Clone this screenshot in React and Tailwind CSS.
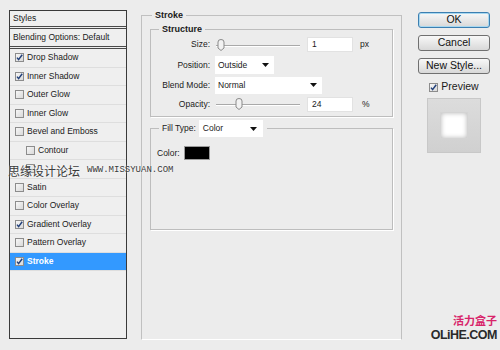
const STYLES = [
  { name: 'Drop Shadow', on: true },
  { name: 'Inner Shadow', on: true },
  { name: 'Outer Glow' },
  { name: 'Inner Glow' },
  { name: 'Bevel and Emboss' },
  { name: 'Contour', indent: true },
  // label hidden under the watermark in the shot
  { name: '', indent: true },
  { name: 'Satin' },
  { name: 'Color Overlay' },
  { name: 'Gradient Overlay', on: true },
  { name: 'Pattern Overlay' },
  { name: 'Stroke', on: true, active: true },
]

function Check({ on }) {
  return (
    <span className="flex h-[9px] w-[9px] shrink-0 items-center justify-center border border-[#8c8c8c] bg-gradient-to-br from-[#f7f7f7] to-[#d9d9d9]">
      {on && (
        <svg width="7" height="7" viewBox="0 0 7 7">
          <path d="M1 3.6 L2.6 5.6 L6.2 0.8" fill="none" stroke="#22407a" strokeWidth="1.5" />
        </svg>
      )}
    </span>
  )
}

function Arrow() {
  return (
    <svg width="7" height="4" viewBox="0 0 7 4" className="shrink-0">
      <path d="M0 0 H7 L3.5 4 Z" fill="#111" />
    </svg>
  )
}

function Slider({ at }) {
  return (
    <div className="relative h-[12px] w-[84px]">
      <div className="absolute left-0 right-0 top-[6px] h-[2px] border-t border-[#a9a9a9] bg-white" />
      <svg width="8" height="12" viewBox="0 0 8 12" className="absolute top-0" style={{ left: at }}>
        <path d="M1 3 Q1 0.5 4 0.5 Q7 0.5 7 3 V9 L4 11.5 L1 9 Z" fill="#f2f2f2" stroke="#8a8a8a" />
      </svg>
    </div>
  )
}

function Field({ value }) {
  return (
    <div className="flex h-[15px] w-[46px] items-center border border-[#e2e2e2] bg-white pl-[4px]">
      {value}
    </div>
  )
}

function Button({ children, primary }) {
  return (
    <div
      className={`flex h-[16px] items-center justify-center rounded-[3px] border bg-gradient-to-b from-[#f8f8f8] to-[#d8d8d8] text-[10.5px] text-[#111] ${
        primary ? 'border-[#3c7fb1] shadow-[inset_0_0_0_1px_#a8d8f0]' : 'border-[#707070]'
      }`}
    >
      {children}
    </div>
  )
}

export default function App() {
  return (
    <div className="relative flex h-[350px] w-[500px] items-start overflow-hidden bg-[#ececec] font-['Liberation_Sans',Arial,sans-serif] text-[8.5px] text-[#1a1a1a]">
      {/* styles list */}
      <div className="ml-[9px] mt-[10px] h-[329px] w-[118px] border border-[#3a3a3a] bg-[#efefef]">
        <div className="flex h-[18px] items-center border-b-[3px] border-double border-[#4a4a4a] pl-[3px]">Styles</div>
        <div className="flex h-[20px] items-center border-b-[3px] border-double border-[#4a4a4a] pl-[3px]">
          Blending Options: Default
        </div>
        {STYLES.map((s, i) => (
          <div
            key={i}
            className={`flex h-[18.5px] items-center gap-[3px] border-b border-[#dedede] ${s.indent ? 'pl-[16px]' : 'pl-[5px]'} ${
              s.active ? 'bg-[#3399ff] font-bold text-white' : ''
            }`}
          >
            <Check on={s.on} />
            {s.name && <span>{s.name}</span>}
          </div>
        ))}
      </div>

      {/* stroke frame */}
      <fieldset className="ml-[14px] mt-[10px] h-[330px] w-[261px] border border-[#c0c0c0] border-b-white px-[8px]">
        <legend className="ml-[2px] px-[3px] text-[9px] font-bold leading-[10px]">Stroke</legend>

        <fieldset className="mt-[4px] h-[93px] border border-[#bdbdbd] shadow-[1px_1px_0_#fff]">
          <legend className="ml-[8px] px-[3px] text-[9px] font-bold leading-[10px]">Structure</legend>
          <div className="flex h-[21px] items-center">
            <span className="w-[59px] text-right">Size:</span>
            <div className="ml-[6px]">
              <Slider at={1} />
            </div>
            <div className="ml-[7px]">
              <Field value="1" />
            </div>
            <span className="ml-[7px]">px</span>
          </div>
          <div className="flex h-[20px] items-center">
            <span className="w-[59px] text-right">Position:</span>
            <div className="ml-[5px] flex h-[18px] w-[59px] items-center justify-between bg-white pl-[3px] pr-[5px]">
              <span>Outside</span>
              <Arrow />
            </div>
          </div>
          <div className="flex h-[20px] items-center">
            <span className="w-[59px] text-right">Blend Mode:</span>
            <div className="ml-[5px] flex h-[17px] w-[107px] items-center justify-between bg-white pl-[3px] pr-[5px]">
              <span>Normal</span>
              <Arrow />
            </div>
          </div>
          <div className="flex h-[18px] items-center">
            <span className="w-[59px] text-right">Opacity:</span>
            <div className="ml-[6px]">
              <Slider at={19} />
            </div>
            <div className="ml-[7px]">
              <Field value="24" />
            </div>
            <span className="ml-[9px]">%</span>
          </div>
        </fieldset>

        <fieldset className="mt-[3px] h-[110px] border border-[#bdbdbd] shadow-[1px_1px_0_#fff]">
          <legend className="ml-[8px] flex items-center gap-[3px] pl-[3px] pr-[4px]">
            <span>Fill Type:</span>
            <div className="flex h-[17px] w-[64px] items-center justify-between bg-white pl-[4px] pr-[6px]">
              <span>Color</span>
              <Arrow />
            </div>
          </legend>
          <div className="mt-[8px] flex h-[16px] items-center pl-[6px]">
            <span className="w-[27px]">Color:</span>
            <div className="h-[14px] w-[26px] border border-[#9a9a9a] bg-black" />
          </div>
        </fieldset>
      </fieldset>

      {/* buttons */}
      <div className="ml-[16px] mt-[12px] flex w-[72px] flex-col">
        <div className="flex flex-col gap-[7px]">
          <Button primary>OK</Button>
          <Button>Cancel</Button>
          <Button>New Style...</Button>
        </div>
        <div className="mt-[7px] flex h-[12px] items-center justify-center gap-[3px] text-[10.5px]">
          <Check on />
          <span>Preview</span>
        </div>
        <div className="mx-auto mt-[5px] flex h-[55px] w-[54px] items-center justify-center border border-[#c8c8c8] bg-gradient-to-b from-[#dcdcdc] to-[#d0d0d0]">
          <div className="h-[27px] w-[28px] border border-[#d4d4d4] bg-white shadow-[inset_0_0_5px_#b8b8b8]" />
        </div>
      </div>

      {/* watermarks */}
      <div className="absolute left-[8px] top-[163px] flex items-center gap-[7px] text-[#3a3a3a] [text-shadow:0_0_2px_#fff]">
        <span className="font-['Noto_Sans_CJK_SC',sans-serif] text-[12px] leading-[16px]">思缘设计论坛</span>
        <span className="font-['Liberation_Mono',monospace] text-[9px]">WWW.MISSYUAN.COM</span>
      </div>
      <div className="absolute bottom-[9px] right-[3px] flex flex-col items-end gap-[3px]">
        <span className="font-['Noto_Sans_CJK_SC',sans-serif] text-[11px] font-bold leading-[11px] text-[#d8246a]">
          活力盒子
        </span>
        <span className="text-[12.5px] font-bold leading-[12px] tracking-[-0.5px] text-[#2a2a2a]">OLiHE.COM</span>
      </div>
    </div>
  )
}
